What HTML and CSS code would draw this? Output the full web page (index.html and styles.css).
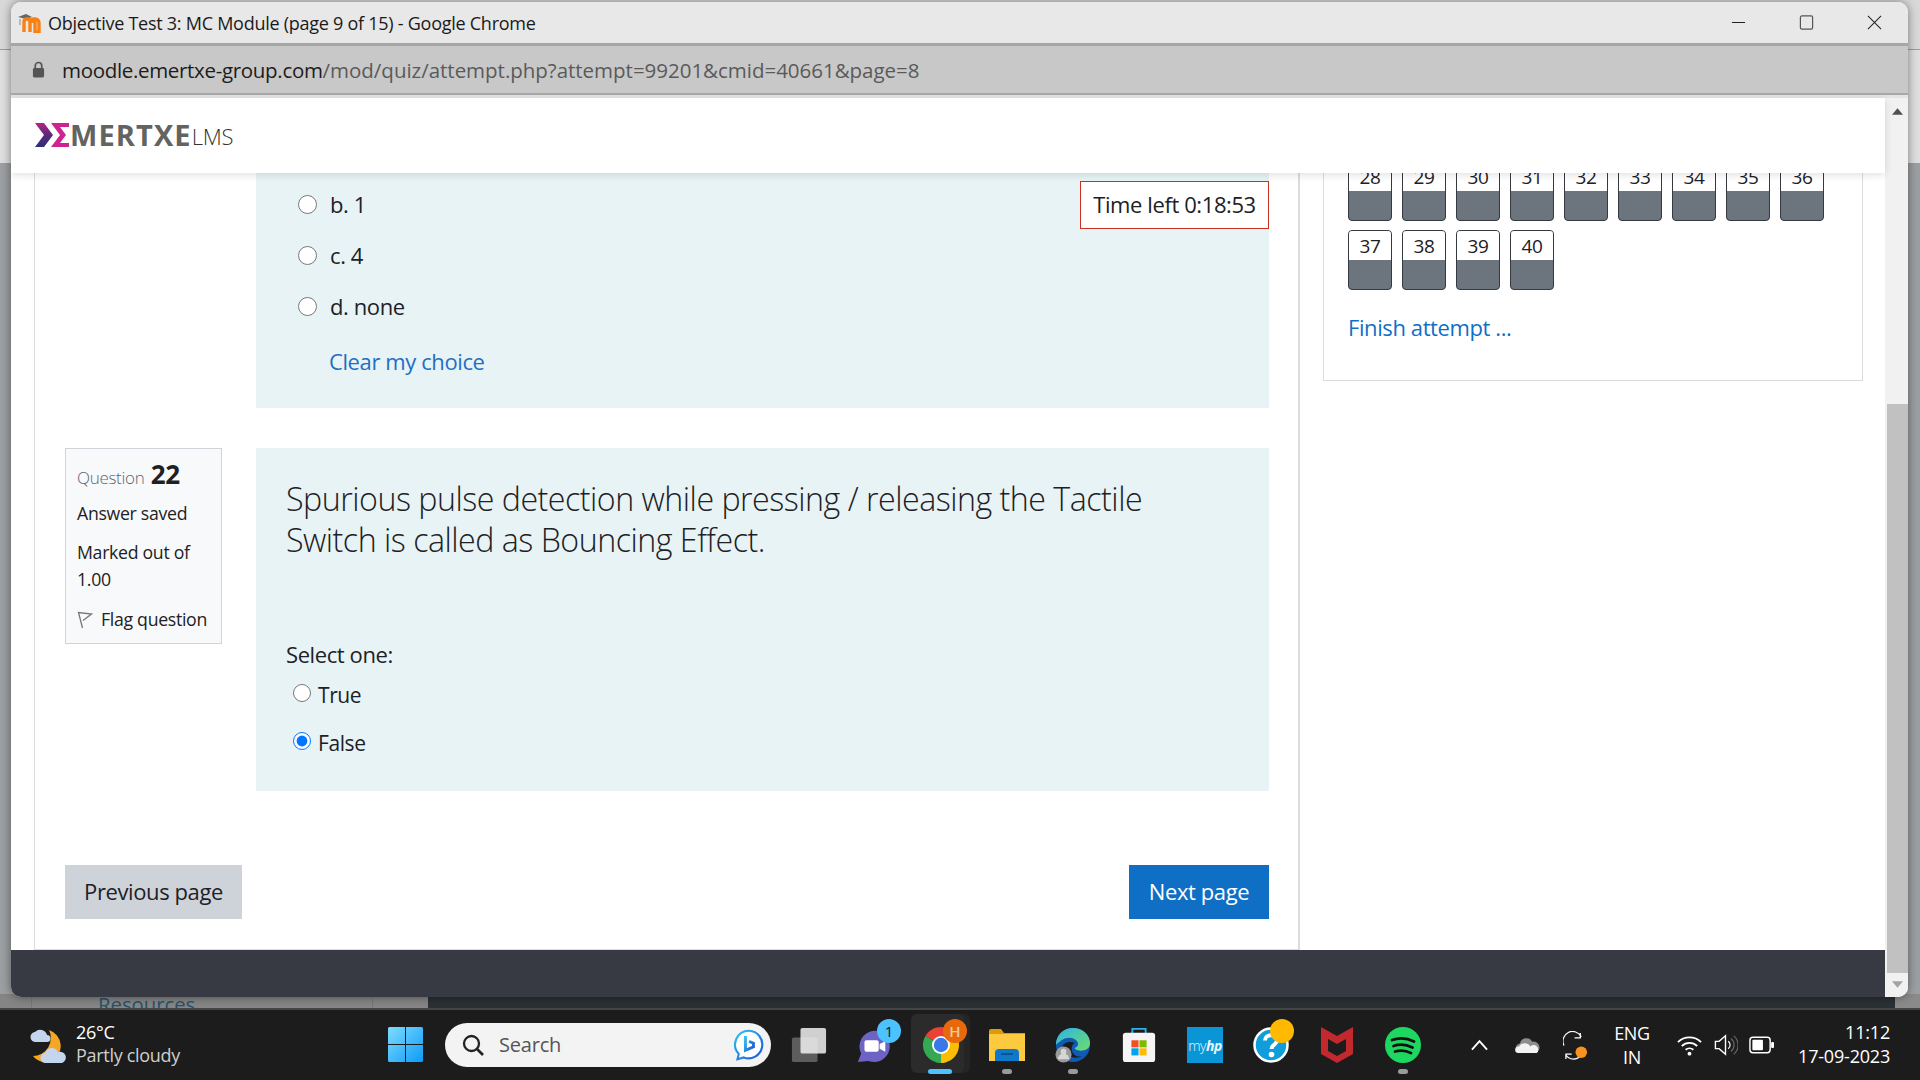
FILE: index.html
```html
<!DOCTYPE html>
<html lang="en">
<head>
<meta charset="utf-8">
<title>Objective Test 3: MC Module (page 9 of 15)</title>
<link rel="stylesheet" href="styles.css">
</head>
<body>
<div class="desktop">
  <div class="desk-top"></div>
  <div class="behind">
    <div class="behind-left"><span class="behind-text">Resources</span></div>
    <div class="behind-dark"></div>
  </div>
  <div class="window">
    <div class="titlebar">
      <svg class="favicon" viewBox="0 0 24 20"><path d="M1 4 9 1l6 3-6 2z" fill="#666"/><path d="M3 6v6" stroke="#999" stroke-width="1.2"/><path d="M7 19V9c0-2 1-3 3-3s3 1 3 3v10M13 9c0-2 1-3 4-3s5 1 5 4v9h-4v-9c0-1-.5-1.500-1.500-1.500S15 9 15 10" fill="none" stroke="#f98012" stroke-width="3.400"/></svg>
      <span class="title-text">Objective Test 3: MC Module (page 9 of 15) - Google Chrome</span>
      <div class="win-controls">
        <svg viewBox="0 0 16 16"><path d="M1 8h14" stroke="#222" stroke-width="1.200"/></svg>
        <svg viewBox="0 0 16 16"><rect x="1.500" y="1" width="13" height="14" rx="1.500" fill="none" stroke="#555" stroke-width="1.300"/></svg>
        <svg viewBox="0 0 16 16"><path d="M1 1l14 14M15 1 1 15" stroke="#222" stroke-width="1.100"/></svg>
      </div>
    </div>
    <div class="addressbar">
      <svg class="lock" viewBox="0 0 14 18"><path d="M3.500 8V5a3.500 3.500 0 0 1 7 0v3" fill="none" stroke="#555" stroke-width="1.800"/><rect x="1" y="7.500" width="12" height="10" rx="1.500" fill="#555"/></svg>
      <span class="url"><span class="url-host">moodle.emertxe-group.com</span>/mod/quiz/attempt.php?attempt=99201&amp;cmid=40661&amp;page=8</span>
    </div>
    <div class="viewport">
      <div class="page">
        <header class="site-header">
          <svg class="logo-mark" viewBox="0 0 34 24">
            <defs><linearGradient id="lg1" x1="0" y1="0" x2="0" y2="1"><stop offset="0" stop-color="#b5247f"/><stop offset=".5" stop-color="#5a2a7c"/><stop offset="1" stop-color="#2b2f78"/></linearGradient></defs>
            <path d="M0 0h9l9 12-9 12H0l9-12z" fill="url(#lg1)"/>
            <path d="M16 0h18v4H25l6 8-6 8h9v4H16l9-12z" fill="#cf2490"/>
          </svg>
          <span class="logo-name">MERTXE</span><span class="logo-lms">LMS</span>
        </header>
        <main class="content">
          <section class="main-col">
            <div class="q-row">
              <div class="q-info-empty"></div>
              <div class="q-body q-body-first">
                <label class="opt"><input type="radio" name="q21"><span>b. 1</span></label>
                <label class="opt"><input type="radio" name="q21"><span>c. 4</span></label>
                <label class="opt"><input type="radio" name="q21"><span>d. none</span></label>
                <a class="clear-link" href="#">Clear my choice</a>
                <div class="timer">Time left 0:18:53</div>
              </div>
            </div>
            <div class="q-row q-row-second">
              <aside class="q-info">
                <div class="q-no"><span class="q-label">Question</span> <b class="q-num">22</b></div>
                <div class="q-state">Answer saved</div>
                <div class="q-grade">Marked out of 1.00</div>
                <div class="q-flag">
                  <svg viewBox="0 0 16 18"><path d="M5.500 17 1.500 1.500 14.500 3 6 9.500" fill="#f8f9fa" stroke="#777" stroke-width="1.300"/></svg>
                  <span>Flag question</span>
                </div>
              </aside>
              <div class="q-body q-body-second">
                <p class="q-text">Spurious pulse detection while pressing / releasing the Tactile Switch is called as Bouncing Effect.</p>
                <div class="select-one">Select one:</div>
                <label class="tf"><input type="radio" name="q22"><span>True</span></label>
                <label class="tf"><input type="radio" name="q22" checked><span>False</span></label>
              </div>
            </div>
            <div class="page-nav">
              <a class="btn btn-prev" href="#">Previous page</a>
              <a class="btn btn-next" href="#">Next page</a>
            </div>
          </section>
          <aside class="side-col">
            <div class="nav-block">
              <div class="nav-grid">
                <a class="nav-btn"><span>28</span></a><a class="nav-btn"><span>29</span></a><a class="nav-btn"><span>30</span></a><a class="nav-btn"><span>31</span></a><a class="nav-btn"><span>32</span></a><a class="nav-btn"><span>33</span></a><a class="nav-btn"><span>34</span></a><a class="nav-btn"><span>35</span></a><a class="nav-btn"><span>36</span></a>
                <a class="nav-btn"><span>37</span></a><a class="nav-btn"><span>38</span></a><a class="nav-btn"><span>39</span></a><a class="nav-btn"><span>40</span></a>
              </div>
              <a class="finish" href="#">Finish attempt ...</a>
            </div>
          </aside>
        </main>
        <footer class="site-footer"></footer>
      </div>
      <div class="scrollbar">
        <svg class="sb-up" viewBox="0 0 10 6"><path d="M5 0l5 6H0z" fill="#505050"/></svg>
        <div class="sb-thumb"></div>
        <svg class="sb-down" viewBox="0 0 10 6"><path d="M5 6 0 0h10z" fill="#a3a3a3"/></svg>
      </div>
    </div>
  </div>
</div>
<div class="taskbar">
  <div class="weather">
    <svg class="weather-icon" viewBox="0 0 38 37">
      <path d="M21 3a17 17 0 0 1 3 31 16 16 0 0 1-19-5 18 18 0 0 0 16-26z" fill="#f5a623"/>
      <path d="M8 15a5 5 0 0 1-1-10 7 7 0 0 1 12 3 3.500 3.500 0 0 1 0 7z" fill="#c5d5ee"/>
      <path d="M18 36a5 5 0 0 1-1-10 7 7 0 0 1 13-1 5.500 5.500 0 0 1 4 11z" fill="#c5d5ee"/>
    </svg>
    <div class="weather-text"><div class="temp">26°C</div><div class="cond">Partly cloudy</div></div>
  </div>
  <svg class="start" viewBox="0 0 35 35">
    <defs><linearGradient id="win" x1="0" y1="0" x2="1" y2="1"><stop offset="0" stop-color="#7fdcff"/><stop offset="1" stop-color="#0d9bf5"/></linearGradient></defs>
    <path d="M1.500 0H17v17H0V1.500A1.500 1.500 0 0 1 1.500 0zM18 0h15.500A1.500 1.500 0 0 1 35 1.500V17H18zM0 18h17v17H1.500A1.500 1.500 0 0 1 0 33.500zM18 18h17v15.500a1.500 1.500 0 0 1-1.500 1.500H18z" fill="url(#win)"/>
  </svg>
  <div class="search">
    <svg class="search-icon" viewBox="0 0 24 24"><circle cx="10.500" cy="10.500" r="7.500" fill="none" stroke="#222" stroke-width="2.300"/><path d="m16 16 6 6" stroke="#222" stroke-width="2.600"/></svg>
    <span class="search-text">Search</span>
    <svg class="bing" viewBox="0 0 36 36">
      <defs><linearGradient id="bg1" x1="0" y1="0" x2="1" y2="1"><stop offset="0" stop-color="#35c1f1"/><stop offset="1" stop-color="#1a55d6"/></linearGradient></defs>
      <path d="M18 2a15.500 15.500 0 1 1-6 30l-7 2 1.500-6A15.500 15.500 0 0 1 18 2z" fill="#fff" stroke="url(#bg1)" stroke-width="2.400"/>
      <path d="M14 8v16l9-4v-4l-5-2" fill="none" stroke="url(#bg1)" stroke-width="3.200"/>
    </svg>
  </div>
  <div class="tb-apps">
    <div class="tb-slot">
      <svg class="ico" viewBox="0 0 38 38"><rect x="1" y="11" width="27" height="26" rx="2" fill="#5d5d5d"/><rect x="10" y="1" width="27" height="27" rx="2" fill="#f0f0f0" fill-opacity=".85"/></svg>
    </div>
    <div class="tb-slot">
      <svg class="ico ico-teams" viewBox="0 0 38 38">
        <path d="M20 4a16.500 16.500 0 1 1-6 31.800L3 37l3.500-9A16.500 16.500 0 0 1 20 4z" fill="#6c63c4"/>
        <rect x="10" y="14" width="15" height="12" rx="2" fill="#fff"/><path d="m26 18 6-3v11l-6-3z" fill="#fff"/>
      </svg>
      <span class="badge badge-blue">1</span>
    </div>
    <div class="tb-slot">
      <div class="chrome-back"></div><div class="chrome-tile"></div>
      <svg class="ico ico-top" viewBox="4 4 40 40">
        <path d="M24 24 6.680 14A20 20 0 0 1 41.320 14z" fill="#ea4335"/>
        <path d="M24 24 41.320 14A20 20 0 0 1 24 44z" fill="#fbbc04"/>
        <path d="M24 24 24 44A20 20 0 0 1 6.680 14z" fill="#34a853"/>
        <circle cx="24" cy="24" r="10" fill="#fff"/><circle cx="24" cy="24" r="8" fill="#3b78e7"/>
      </svg>
      <span class="badge badge-orange">H</span>
      <i class="ind ind-active"></i>
    </div>
    <div class="tb-slot">
      <svg class="ico" viewBox="0 0 36 36"><path d="M0 4a2 2 0 0 1 2-2h10l3 4h0L36 6v4H0z" fill="#dc9c0a"/><path d="M0 7h36v27H0z" fill="#fcc93f"/><path d="M6 26a4 4 0 0 1 4-4h16a4 4 0 0 1 4 4v8H6z" fill="#0f78c8"/><path d="M12 27h12" stroke="#064a85" stroke-width="1.500"/></svg>
      <i class="ind"></i>
    </div>
    <div class="tb-slot">
      <svg class="ico" viewBox="0 0 38 38">
        <defs><linearGradient id="ed1" x1="0" y1="0" x2="1" y2="1"><stop offset="0" stop-color="#2bb5e8"/><stop offset="1" stop-color="#6fdc6a"/></linearGradient></defs>
        <circle cx="19" cy="19" r="18" fill="#0f5ab5"/>
        <path d="M19 1c11 0 18 8 18 16 0 6-5 8-10 8-4 0-7-2-6-3 3-1 4-3 3-6-2-4-8-6-13-4C6 14 1 19 1 19 1 9 8 1 19 1z" fill="url(#ed1)"/>
        <path d="M8 23c2 7 10 11 18 9l3-1c-5 1-9-1-11-5-1-3 0-8 3-9-5-3-15 0-13 6z" fill="#1c1c1c"/>
        <circle cx="9" cy="29" r="8.500" fill="#9a9a9a"/><circle cx="9" cy="26" r="3" fill="#d6d6d6"/><path d="M3 34a6 6 0 0 1 12 0z" fill="#d6d6d6"/>
      </svg>
      <i class="ind"></i>
    </div>
    <div class="tb-slot">
      <svg class="ico" viewBox="0 0 36 38"><path d="M11 7V2h14v5" fill="none" stroke="#28b4e8" stroke-width="2"/><rect x="1" y="6" width="34" height="31" rx="3" fill="#f5f5f5"/><rect x="10" y="14" width="7.500" height="7.500" fill="#f25022"/><rect x="18.500" y="14" width="7.500" height="7.500" fill="#7fba00"/><rect x="10" y="22.500" width="7.500" height="7.500" fill="#00a4ef"/><rect x="18.500" y="22.500" width="7.500" height="7.500" fill="#ffb900"/></svg>
    </div>
    <div class="tb-slot"><div class="myhp">my<b>hp</b></div></div>
    <div class="tb-slot">
      <svg class="ico" viewBox="0 0 36 36"><circle cx="18" cy="18" r="16.500" fill="#0f9ddb" stroke="#fff" stroke-width="2.500"/><path d="M12 13.500c0-7 12-7 12 0 0 4-5.500 4-5.500 8.500" fill="none" stroke="#fff" stroke-width="4"/><circle cx="18.500" cy="27.500" r="2.800" fill="#fff"/></svg>
      <span class="badge badge-yellow"></span>
    </div>
    <div class="tb-slot">
      <svg class="ico" viewBox="0 0 32 36"><path d="M0 0 16 9 32 0v27L16 36 0 27zM7 12v12l9 5 9-5V12l-9 5z" fill="#c1292e"/></svg>
    </div>
    <div class="tb-slot">
      <svg class="ico" viewBox="0 0 36 36"><circle cx="18" cy="18" r="18" fill="#1ed760"/><path d="M7 13c7-2.500 15-2 22 1.500M8.500 19c6-2 13-1.500 19 1.500M10 24.500c5-1.500 11-1 16 1.500" fill="none" stroke="#111" stroke-width="2.800" stroke-linecap="round"/></svg>
      <i class="ind"></i>
    </div>
  </div>
  <div class="tray">
    <div class="tray-slot"><svg class="tray-ico" viewBox="0 0 18 12"><path d="M1 11 9 2l8 9" fill="none" stroke="#fff" stroke-width="2"/></svg></div>
    <div class="tray-slot"><svg class="tray-ico tray-cloud" viewBox="0 0 26 18"><path d="M6 17a5 5 0 0 1-1-10 7 7 0 0 1 13-2 6 6 0 0 1 3 12z" fill="#8d8d8d"/><path d="M3 17a3.500 3.500 0 0 1 1-7 7 7 0 0 1 12 0 3.500 3.500 0 0 1 7 7z" fill="#f2f2f2"/></svg></div>
    <div class="tray-slot"><svg class="tray-ico tray-sync" viewBox="0 0 26 30"><path d="M1 15A10 10 0 0 1 19 6M18 2v5h-6M21 18a10 10 0 0 1-18 7M3 29v-5h6" fill="none" stroke="#fff" stroke-width="1.300"/><circle cx="19" cy="22" r="6" fill="#f7931e"/></svg></div>
    <div class="lang"><div>ENG</div><div>IN</div></div>
    <div class="net-group">
      <svg class="net-ico" viewBox="0 0 26 22"><path d="M1 8a17 17 0 0 1 24 0M5 12a11.500 11.500 0 0 1 16 0M9 16a6 6 0 0 1 8 0" fill="none" stroke="#fff" stroke-width="2"/><circle cx="13" cy="20" r="2" fill="#fff"/></svg>
      <svg class="net-ico" viewBox="0 0 26 24"><path d="M2 8h4l7-6v20l-7-6H2z" fill="none" stroke="#fff" stroke-width="1.500"/><path d="M16 8a5 5 0 0 1 0 8" fill="none" stroke="#fff" stroke-width="1.300"/><path d="M19 5a9 9 0 0 1 0 14M22 2a13 13 0 0 1 0 20" fill="none" stroke="#666" stroke-width="1.300"/></svg>
      <svg class="net-ico" viewBox="0 0 26 18"><rect x="1" y="1" width="21" height="16" rx="3" fill="none" stroke="#fff" stroke-width="1.500"/><rect x="3.500" y="3.500" width="11" height="11" rx="1" fill="#fff"/><rect x="23" y="6" width="3" height="6" rx="1" fill="#fff"/></svg>
    </div>
    <div class="clock"><div>11:12</div><div>17-09-2023</div></div>
  </div>
</div>
</body>
</html>
```

FILE: styles.css
```css
* { box-sizing: border-box; }
html, body { margin: 0; padding: 0; }
body {
  width: 1920px;
  height: 1080px;
  overflow: hidden;
  display: flex;
  flex-direction: column;
  font-family: "Open Sans", "Noto Sans", sans-serif;
  color: #1d2125;
}
a { text-decoration: none; }

/* desktop */
.desktop {
  position: relative;
  height: 1008px;
  flex: none;
  background: #9b9fa1;
}
.desk-top {
  position: absolute;
  left: 0; right: 0; top: 0;
  height: 163px;
  background: linear-gradient(#d8d8d8 0 49px, #9c9c9c 49px 50px, #dedede 50px);
}
.behind {
  position: absolute;
  left: 0; right: 0; bottom: 0;
  height: 14px;
  display: flex;
  overflow: hidden;
  background: #8a8a8a;
}
.behind-left {
  width: 428px;
  background: linear-gradient(90deg, #858585 0 31px, #777 31px 32px, #858585 32px 372px, #777 372px 373px, #858585 373px);
  padding-left: 98px;
}
.behind-text {
  display: block;
  font-size: 20.300px;
  line-height: 26px;
  margin-top: -3px;
  color: #24536e;
}
.behind-dark {
  width: 1467px;
  background: #2b3035;
  border-top: 2px solid #45484b;
}

/* window */
.window {
  position: absolute;
  left: 11px;
  top: 2px;
  width: 1897px;
  height: 995px;
  border-radius: 10px;
  overflow: hidden;
  display: flex;
  flex-direction: column;
  box-shadow: 0 0 10px rgba(0,0,0,.45);
  background: #fff;
}
.titlebar {
  height: 44px;
  flex: none;
  display: flex;
  align-items: center;
  background: #e8e8e8;
  border-bottom: 3px solid #a6a6a6;
  padding-left: 6px;
}
.favicon { width: 24px; height: 20px; }
.title-text {
  margin-left: 7px;
  font-size: 18px;
  letter-spacing: -.26px;
  color: #1a1a1a;
}
.win-controls {
  margin-left: auto;
  display: flex;
  gap: 53px;
  padding-right: 26px;
}
.win-controls svg { width: 15px; height: 15px; }
.addressbar {
  height: 49px;
  flex: none;
  display: flex;
  align-items: center;
  background: #c8c8c8;
  border-bottom: 2px solid #a8a8a8;
  padding-left: 21px;
}
.lock { width: 13px; height: 17px; }
.url {
  margin-left: 17px;
  font-size: 20.500px;
  letter-spacing: -.02px;
  color: #5a5a5a;
}
.url-host { color: #1c1c1c; letter-spacing: -.32px; }
.viewport {
  flex: 1;
  min-height: 0;
  display: flex;
  border-top: 3px solid #e4e4e4;
}
.page {
  flex: 1;
  min-width: 0;
  display: flex;
  flex-direction: column;
}
.site-header {
  position: relative;
  z-index: 2;
  height: 75px;
  flex: none;
  background: #fff;
  box-shadow: 0 2px 8px rgba(0,0,0,.12);
  display: flex;
  align-items: center;
  padding-left: 24px;
  padding-bottom: 3px;
}
.logo-mark { width: 34px; height: 24px; margin-top: 2px; }
.logo-name {
  margin-left: 1px;
  font-size: 29px;
  font-weight: 700;
  color: #63635f;
  letter-spacing: 1.100px;
}
.logo-lms {
  font-size: 22px;
  font-weight: 300;
  color: #333;
  margin-top: 3px;
  letter-spacing: -.2px;
}
.content {
  flex: 1;
  min-height: 0;
  overflow: hidden;
  display: flex;
  padding-left: 23px;
  background: #fff;
}
.main-col {
  width: 1266px;
  flex: none;
  height: 777px;
  padding: 0 29px 30px 30px;
  border-left: 1px solid #dcdcdc;
  border-right: 2px solid #dcdcdc;
  border-bottom: 1px solid #dcdcdc;
}
.q-row { display: flex; gap: 34px; }
.q-row-second { margin-top: 40px; }
.q-info-empty { width: 157px; flex: none; }
.q-body {
  flex: 1;
  position: relative;
  background: #e7f3f5;
}
.q-body-first { padding: 6px 0 31px 42px; }
.opt {
  height: 51px;
  display: flex;
  align-items: center;
  gap: 13px;
  font-size: 22px;
  letter-spacing: -.4px;
}
.opt input { width: 19px; height: 19px; margin: 0; flex: none; }
.opt span { margin-top: -2px; }
.clear-link {
  display: block;
  margin: 13px 0 0 31px;
  font-size: 22px;
  line-height: 32px;
  letter-spacing: -.4px;
  color: #1f6fc4;
}
.timer {
  position: absolute;
  top: 8px;
  right: 0;
  width: 189px;
  height: 48px;
  display: flex;
  align-items: center;
  justify-content: center;
  background: #fff;
  border: 1px solid #ca3120;
  padding-bottom: 2px;
  font-size: 22px;
  letter-spacing: -.4px;
}
.q-info {
  width: 157px;
  height: 196px;
  flex: none;
  padding: 7px 8px 0 11px;
  background: #f8f9fa;
  border: 1px solid #cfd4da;
  font-size: 17.700px;
  letter-spacing: -.3px;
  line-height: 27px;
}
.q-no { height: 36px; line-height: 36px; white-space: nowrap; }
.q-label { font-size: 17px; font-weight: 300; color: #5b6670; }
.q-num { font-size: 26px; font-weight: 700; color: #1d2125; margin-left: 2px; }
.q-state { margin-top: 8px; }
.q-grade { margin-top: 12px; }
.q-flag {
  margin-top: 13px;
  display: flex;
  align-items: center;
  gap: 8px;
  white-space: nowrap;
}
.q-flag svg { width: 16px; height: 18px; flex: none; }
.q-body-second { height: 343px; padding: 30px 60px 0 30px; }
.q-text {
  margin: 0;
  font-size: 32.200px;
  font-weight: 300;
  line-height: 41px;
  letter-spacing: -.5px;
  color: #1d2125;
}
.select-one {
  margin: 79px 0 1px;
  font-size: 22px;
  line-height: 30px;
  letter-spacing: -.4px;
}
.tf {
  height: 48px;
  margin-left: 7px;
  display: flex;
  align-items: center;
  gap: 7px;
  font-size: 21px;
  letter-spacing: -.4px;
}
.tf input { width: 18px; height: 18px; margin: -2px 0 0; flex: none; }
.tf span { margin-top: 1px; }
.page-nav {
  margin-top: 74px;
  display: flex;
  justify-content: space-between;
}
.btn {
  height: 54px;
  display: flex;
  align-items: center;
  justify-content: center;
  padding-bottom: 3px;
  font-size: 22px;
  letter-spacing: -.4px;
}
.btn-prev { width: 177px; background: #ced3da; color: #1d2125; }
.btn-next { width: 140px; background: #0f6fc5; color: #fff; }
.side-col { flex: 1; padding: 0 22px 0 23px; }
.nav-block {
  margin-top: -33px;
  padding: 20px 0 37px 24px;
  border: 1px solid #dcdcdc;
}
.nav-grid {
  display: grid;
  grid-template-columns: repeat(9, 44px);
  gap: 9px 10px;
}
.nav-btn {
  height: 60px;
  border: 1px solid #343a40;
  border-radius: 4px;
  overflow: hidden;
  background: #6c757d;
  text-align: center;
  font-size: 19px;
  color: #1d2125;
  letter-spacing: -.3px;
}
.nav-btn span {
  display: block;
  height: 29px;
  line-height: 31px;
  background: #fff;
}
.finish {
  display: block;
  margin-top: 21px;
  line-height: 32px;
  font-size: 22px;
  letter-spacing: -.4px;
  color: #0f6fc5;
}
.site-footer {
  height: 47px;
  flex: none;
  background: #373a42;
}
.scrollbar {
  width: 23px;
  flex: none;
  position: relative;
  background: #f1f1f1;
  display: flex;
  flex-direction: column;
  align-items: flex-end;
}
.sb-up { width: 11px; height: 7px; margin: 10px 5px 0 0; }
.sb-thumb { width: 21px; height: 569px; margin-top: 289px; background: #c1c1c1; }
.sb-down { width: 11px; height: 7px; margin: 8px 5px 0 0; }

/* taskbar */
.taskbar {
  height: 72px;
  flex: none;
  border-top: 2px solid #454545;
  background: #1c1c1c;
  display: flex;
  align-items: center;
  padding-left: 28px;
  color: #fff;
}
.weather {
  width: 360px;
  flex: none;
  display: flex;
  align-items: center;
  gap: 10px;
}
.weather-icon { width: 38px; height: 37px; flex: none; }
.weather-text { font-size: 18px; line-height: 23px; letter-spacing: -.3px; margin-top: -2px; }
.temp { color: #fff; }
.cond { color: #cfcfcf; }
.start { width: 35px; height: 35px; flex: none; margin-top: -1px; }
.search {
  width: 326px;
  height: 44px;
  margin-left: 22px;
  flex: none;
  display: flex;
  align-items: center;
  background: #f3f3f3;
  border-radius: 22px;
  padding-left: 16px;
  color: #555;
}
.search-icon { width: 24px; height: 24px; flex: none; }
.search-text { margin: -2px 0 0 14px; font-size: 20px; letter-spacing: -.2px; }
.bing { width: 32px; height: 32px; margin-left: auto; margin-right: 6px; }
.tb-apps { display: flex; margin-left: 5px; flex: none; }
.tb-slot {
  position: relative;
  width: 66px;
  height: 70px;
  display: flex;
  align-items: center;
  justify-content: center;
}
.ico { width: 36px; height: 36px; }
.ico-top { position: relative; }
.ico-teams { margin-left: -4px; }
.badge {
  position: absolute;
  top: 9px;
  left: 41px;
  width: 24px;
  height: 24px;
  border-radius: 50%;
  display: flex;
  align-items: center;
  justify-content: center;
  font-size: 15px;
  font-weight: 600;
}
.badge-blue { background: #4cc2ff; color: #111; left: 35px; font-weight: 400; }
.badge-orange { background: #e8690b; color: #f2c9a8; left: 35px; }
.badge-yellow { background: #ffb900; left: 32px; }
.chrome-tile {
  position: absolute;
  left: 3px; top: 4px;
  width: 53px; height: 59px;
  background: #2b2b2b;
  border-radius: 6px;
}
.chrome-back {
  position: absolute;
  left: 9px; top: 4px;
  width: 53px; height: 59px;
  background: #252525;
  border-radius: 6px;
}
.ind {
  position: absolute;
  left: 50%;
  bottom: 6px;
  width: 10px;
  height: 5px;
  margin-left: -5px;
  background: #9a9a9a;
  border-radius: 3px;
}
.ind-active { width: 24px; margin-left: -13px; background: #4cc2ff; }
.myhp {
  width: 36px;
  height: 36px;
  background: #0a96d6;
  display: flex;
  align-items: center;
  justify-content: center;
  font-size: 14px;
  font-weight: 300;
  color: #e8f6fc;
  letter-spacing: -.5px;
}
.myhp b { font-style: italic; font-weight: 700; }
.tray { flex: 1; display: flex; align-items: center; margin-left: 19px; }
.tray-slot {
  width: 48px;
  display: flex;
  justify-content: center;
}
.tray-ico { width: 17px; height: 12px; }
.tray-cloud { width: 25px; height: 17px; }
.tray-sync { width: 25px; height: 29px; }
.lang {
  width: 66px;
  text-align: center;
  font-size: 18px;
  line-height: 24px;
  letter-spacing: -.3px;
}
.net-group {
  width: 108px;
  margin-left: 6px;
  display: flex;
  align-items: center;
  justify-content: space-around;
}
.net-ico { width: 25px; height: 22px; }
.clock {
  flex: 1;
  padding-right: 30px;
  margin-top: -2px;
  text-align: right;
  font-size: 18px;
  line-height: 24px;
  letter-spacing: -.2px;
}
```
